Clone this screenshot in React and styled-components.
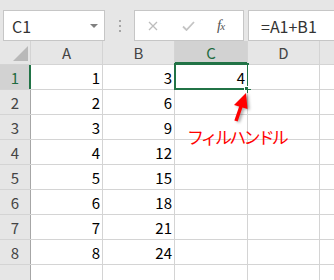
import React from 'react';
import styled, { createGlobalStyle, css } from 'styled-components';

const GlobalStyle = createGlobalStyle`
  body {
    margin: 0;
    background: #e6e6e6;
    font-family: "Noto Sans CJK JP", "Noto Sans", sans-serif;
  }
`;

const Window = styled.div`
  width: 334px;
  height: 280px;
  overflow: hidden;
  display: flex;
  flex-direction: column;
  background: #e6e6e6;
`;

const FormulaBar = styled.div`
  height: 51px;
  box-sizing: border-box;
  padding: 10px 0 0 3px;
  display: flex;
  align-items: flex-start;
`;

const Box = styled.div`
  height: 31px;
  box-sizing: border-box;
  background: #fff;
  border: 1px solid #c6c6c6;
  display: flex;
  align-items: center;
`;

const NameBox = styled(Box)`
  width: 102px;
  padding: 0 6px 0 8px;
  justify-content: space-between;
  font-size: 16px;
  color: #333;
`;

const Caret = styled.span`
  width: 0;
  height: 0;
  border-left: 4px solid transparent;
  border-right: 4px solid transparent;
  border-top: 4px solid #808080;
`;

const Grip = styled.div`
  width: 2px;
  margin: 10px 13px 0 14px;
  display: flex;
  flex-direction: column;
  gap: 3px;
  span {
    width: 2px;
    height: 2px;
    background: #a6a6a6;
  }
`;

const ButtonBox = styled(Box)`
  width: 110px;
  padding: 0 6px 0 13px;
  gap: 24px;
`;

const FxLabel = styled.span`
  font-family: "Liberation Serif", serif;
  font-style: italic;
  font-size: 15px;
  color: #555;
  margin-left: -2px;
  letter-spacing: -1px;
  small {
    font-size: 11px;
  }
`;

const FormulaInput = styled(Box)`
  flex: 1;
  margin-left: 4px;
  border-right: none;
  padding-left: 12px;
  font-size: 16px;
  color: #333;
`;

const Sheet = styled.div`
  position: relative;
  flex: 1;
  display: grid;
  grid-template-columns: 30px 71px 71px 72px 71px 1fr;
  grid-template-rows: 23px;
  grid-auto-rows: 24px;
  gap: 1px;
  background: #d4d4d4;
`;

const headerBase = css`
  background: ${({ $active }) => ($active ? '#d2d2d2' : '#e6e6e6')};
  color: ${({ $active }) => ($active ? '#1e6b41' : '#444')};
  font-size: 15px;
  display: flex;
  align-items: center;
  justify-content: center;
`;

const Corner = styled.div`
  background: #e6e6e6;
  position: relative;
  &::after {
    content: '';
    position: absolute;
    right: 2px;
    bottom: 3px;
    width: 0;
    height: 0;
    border-left: 15px solid transparent;
    border-bottom: 15px solid #b9b9b9;
  }
`;

const ColHeader = styled.div`
  ${headerBase};
  ${({ $active }) => $active && 'box-shadow: inset 0 -2px 0 #217346;'}
`;

const RowHeader = styled.div`
  ${headerBase};
  box-shadow: ${({ $active }) =>
    $active ? 'inset -1px 0 0 #217346, 1px 0 0 #217346' : '1px 0 0 #a6a6a6'};
`;

const Cell = styled.div`
  position: relative;
  background: #fff;
  font-size: 15px;
  color: #000;
  display: flex;
  align-items: center;
  justify-content: flex-end;
  padding-right: 2px;
  ${({ $selected }) =>
    $selected &&
    css`
      &::before {
        content: '';
        position: absolute;
        inset: -2px -2px -1px -1px;
        border: 2px solid #217346;
      }
      &::after {
        content: '';
        position: absolute;
        right: -4px;
        bottom: -4px;
        width: 6px;
        height: 6px;
        background: #217346;
        box-shadow: -1px -1px 0 #fff;
      }
    `}
`;

const Arrow = styled.svg`
  position: absolute;
  left: 225px;
  top: 49px;
  overflow: visible;
  filter: drop-shadow(2px 1px 1.5px rgba(0, 0, 0, 0.35));
`;

const Callout = styled.div`
  position: absolute;
  left: 187px;
  top: 86px;
  font-size: 17px;
  line-height: 20px;
  letter-spacing: -2.8px;
  color: #ff0000;
  white-space: nowrap;
`;

const columns = ['A', 'B', 'C', 'D', ''];
const rows = [1, 2, 3, 4, 5, 6, 7, 8, 9];

const CrossIcon = () => (
  <svg width="10" height="10" viewBox="0 0 10 10">
    <path d="M1 1L9 9M9 1L1 9" stroke="#bdbdbd" strokeWidth="1.3" fill="none" />
  </svg>
);

const CheckIcon = () => (
  <svg width="13" height="10" viewBox="0 0 13 10">
    <path d="M1 5.5L4.5 9L12 1" stroke="#c4c4c4" strokeWidth="1.8" fill="none" />
  </svg>
);

const App = () => (
  <>
    <GlobalStyle />
    <Window>
      <FormulaBar>
        <NameBox>
          C1
          <Caret />
        </NameBox>
        <Grip>
          <span />
          <span />
          <span />
        </Grip>
        <ButtonBox>
          <CrossIcon />
          <CheckIcon />
          <FxLabel>
            f<small>x</small>
          </FxLabel>
        </ButtonBox>
        <FormulaInput>=A1+B1</FormulaInput>
      </FormulaBar>
      <Sheet>
        <Corner />
        {columns.map((c, i) => (
          <ColHeader key={`h${i}`} $active={c === 'C'}>
            {c}
          </ColHeader>
        ))}
        {rows.map((r) => (
          <React.Fragment key={r}>
            {/* row 9 is cut by the window edge, its number falls below it */}
            <RowHeader $active={r === 1}>{r < 9 ? r : ''}</RowHeader>
            <Cell>{r < 9 ? r : ''}</Cell>
            <Cell>{r < 9 ? r * 3 : ''}</Cell>
            <Cell $selected={r === 1}>{r === 1 ? 4 : ''}</Cell>
            <Cell />
            <Cell />
          </React.Fragment>
        ))}
        <Arrow width="30" height="35" viewBox="0 0 30 35">
          <path d="M11 31L16.5 15" stroke="#ff0000" strokeWidth="3.5" fill="none" />
          <polygon points="21,3 22.5,19 9,15" fill="#ff0000" />
        </Arrow>
        <Callout>フィルハンドル</Callout>
      </Sheet>
    </Window>
  </>
);

export default App;
